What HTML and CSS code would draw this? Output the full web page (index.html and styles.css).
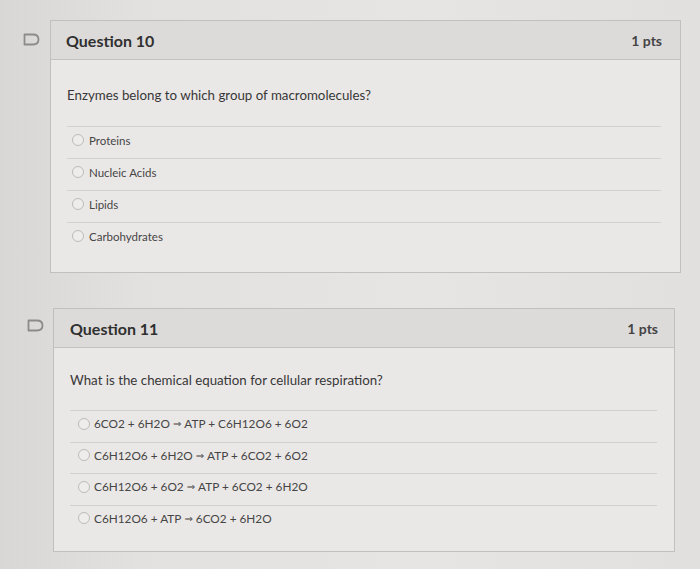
FILE: index.html
```html
<!DOCTYPE html>
<html>
<head>
<meta charset="utf-8">
<link rel="stylesheet" href="styles.css">
</head>
<body>
<div class="page">
  <section class="question q10">
    <div class="flag"><svg width="17" height="13" viewBox="0 0 17 13"><path d="M1.5 1.5 H10 Q15.5 1.5 15.5 6.5 Q15.5 11.5 10 11.5 H1.5 Z" fill="none" stroke="#8d8b8a" stroke-width="1.8" stroke-linejoin="round"/></svg></div>
    <div class="card">
      <div class="card-head"><span class="title">Question 10</span><span class="pts">1 pts</span></div>
      <div class="card-body">
        <p class="prompt">Enzymes belong to which group of macromolecules?</p>
        <ul class="answers">
          <li><span class="radio"></span>Proteins</li>
          <li><span class="radio"></span>Nucleic Acids</li>
          <li><span class="radio"></span>Lipids</li>
          <li><span class="radio"></span>Carbohydrates</li>
        </ul>
      </div>
    </div>
  </section>
  <section class="question q11">
    <div class="flag"><svg width="17" height="13" viewBox="0 0 17 13"><path d="M1.5 1.5 H10 Q15.5 1.5 15.5 6.5 Q15.5 11.5 10 11.5 H1.5 Z" fill="none" stroke="#8d8b8a" stroke-width="1.8" stroke-linejoin="round"/></svg></div>
    <div class="card">
      <div class="card-head"><span class="title">Question 11</span><span class="pts">1 pts</span></div>
      <div class="card-body">
        <p class="prompt">What is the chemical equation for cellular respiration?</p>
        <ul class="answers">
          <li><span class="radio"></span>6CO2 + 6H2O <span class="arrow">⇒</span> ATP + C6H12O6 + 6O2</li>
          <li><span class="radio"></span>C6H12O6 + 6H2O <span class="arrow">⇒</span> ATP + 6CO2 + 6O2</li>
          <li><span class="radio"></span>C6H12O6 + 6O2 <span class="arrow">⇒</span> ATP + 6CO2 + 6H2O</li>
          <li><span class="radio"></span>C6H12O6 + ATP <span class="arrow">⇒</span> 6CO2 + 6H2O</li>
        </ul>
      </div>
    </div>
  </section>
</div>
</body>
</html>
```
FILE: styles.css
```css
html, body {
  margin: 0;
  padding: 0;
}
body {
  background: linear-gradient(90deg, #d9d7d6 0%, #e3e1e0 20%, #e7e5e4 60%, #e2e0df 100%);
  font-family: Lato, "Open Sans", sans-serif;
  color: #3b3a3a;
  width: 700px;
  height: 569px;
  overflow: hidden;
}
.page {
  padding-top: 20px;
  display: flex;
  flex-direction: column;
  gap: 35px;
}
.question {
  display: flex;
  align-items: flex-start;
}
.flag {
  width: 17px;
  height: 13px;
  margin-top: 13px;
}
.flag svg { display: block; }
.q10 .flag { margin-left: 23px; margin-right: 10px; }
.q11 .flag { margin-left: 27px; margin-right: 9px; margin-top: 11px; }
.card {
  border: 1px solid #c2c0bf;
  background: #eae8e7;
}
.q10 .card { width: 629px; }
.q11 .card { width: 620px; }
.card-head {
  height: 38px;
  background: #dddbda;
  border-bottom: 1px solid #c4c2c1;
  display: flex;
  align-items: center;
  justify-content: space-between;
  padding: 0 18px 0 15px;
}
.q11 .card-head { padding: 0 16px 0 16px; }
.title {
  font-size: 16px;
  font-weight: 700;
  color: #303030;
}
.pts {
  font-size: 14px;
  font-weight: 700;
  color: #444;
}
.card-body {
  padding: 27px 19px 18px 16px;
}
.q11 .card-body { padding: 24px 17px 15px 16px; }
.prompt {
  margin: 0;
  font-size: 13.3px;
  line-height: 16px;
  color: #383737;
}
.answers {
  list-style: none;
  margin: 23px 0 0 0;
  padding: 0;
}
.q11 .answers { margin-top: 22px; }
.answers li {
  border-top: 1px solid #d3d1d0;
  height: 26px;
  padding-bottom: 5px;
  display: flex;
  align-items: center;
  font-size: 11.5px;
  color: #464545;
}
.q11 .answers li {
  height: 25.5px;
  font-size: 11.8px;
}
.radio {
  width: 10px;
  height: 10px;
  border: 1px solid #bdbbba;
  border-radius: 50%;
  background: #efedec;
  margin-left: 5px;
  margin-right: 5px;
  flex: none;
}
.q11 .radio { margin-left: 8px; margin-right: 4px; }
.arrow {
  font-family: "DejaVu Sans", sans-serif;
  font-size: 10px;
  margin: 0 3px;
}
```
